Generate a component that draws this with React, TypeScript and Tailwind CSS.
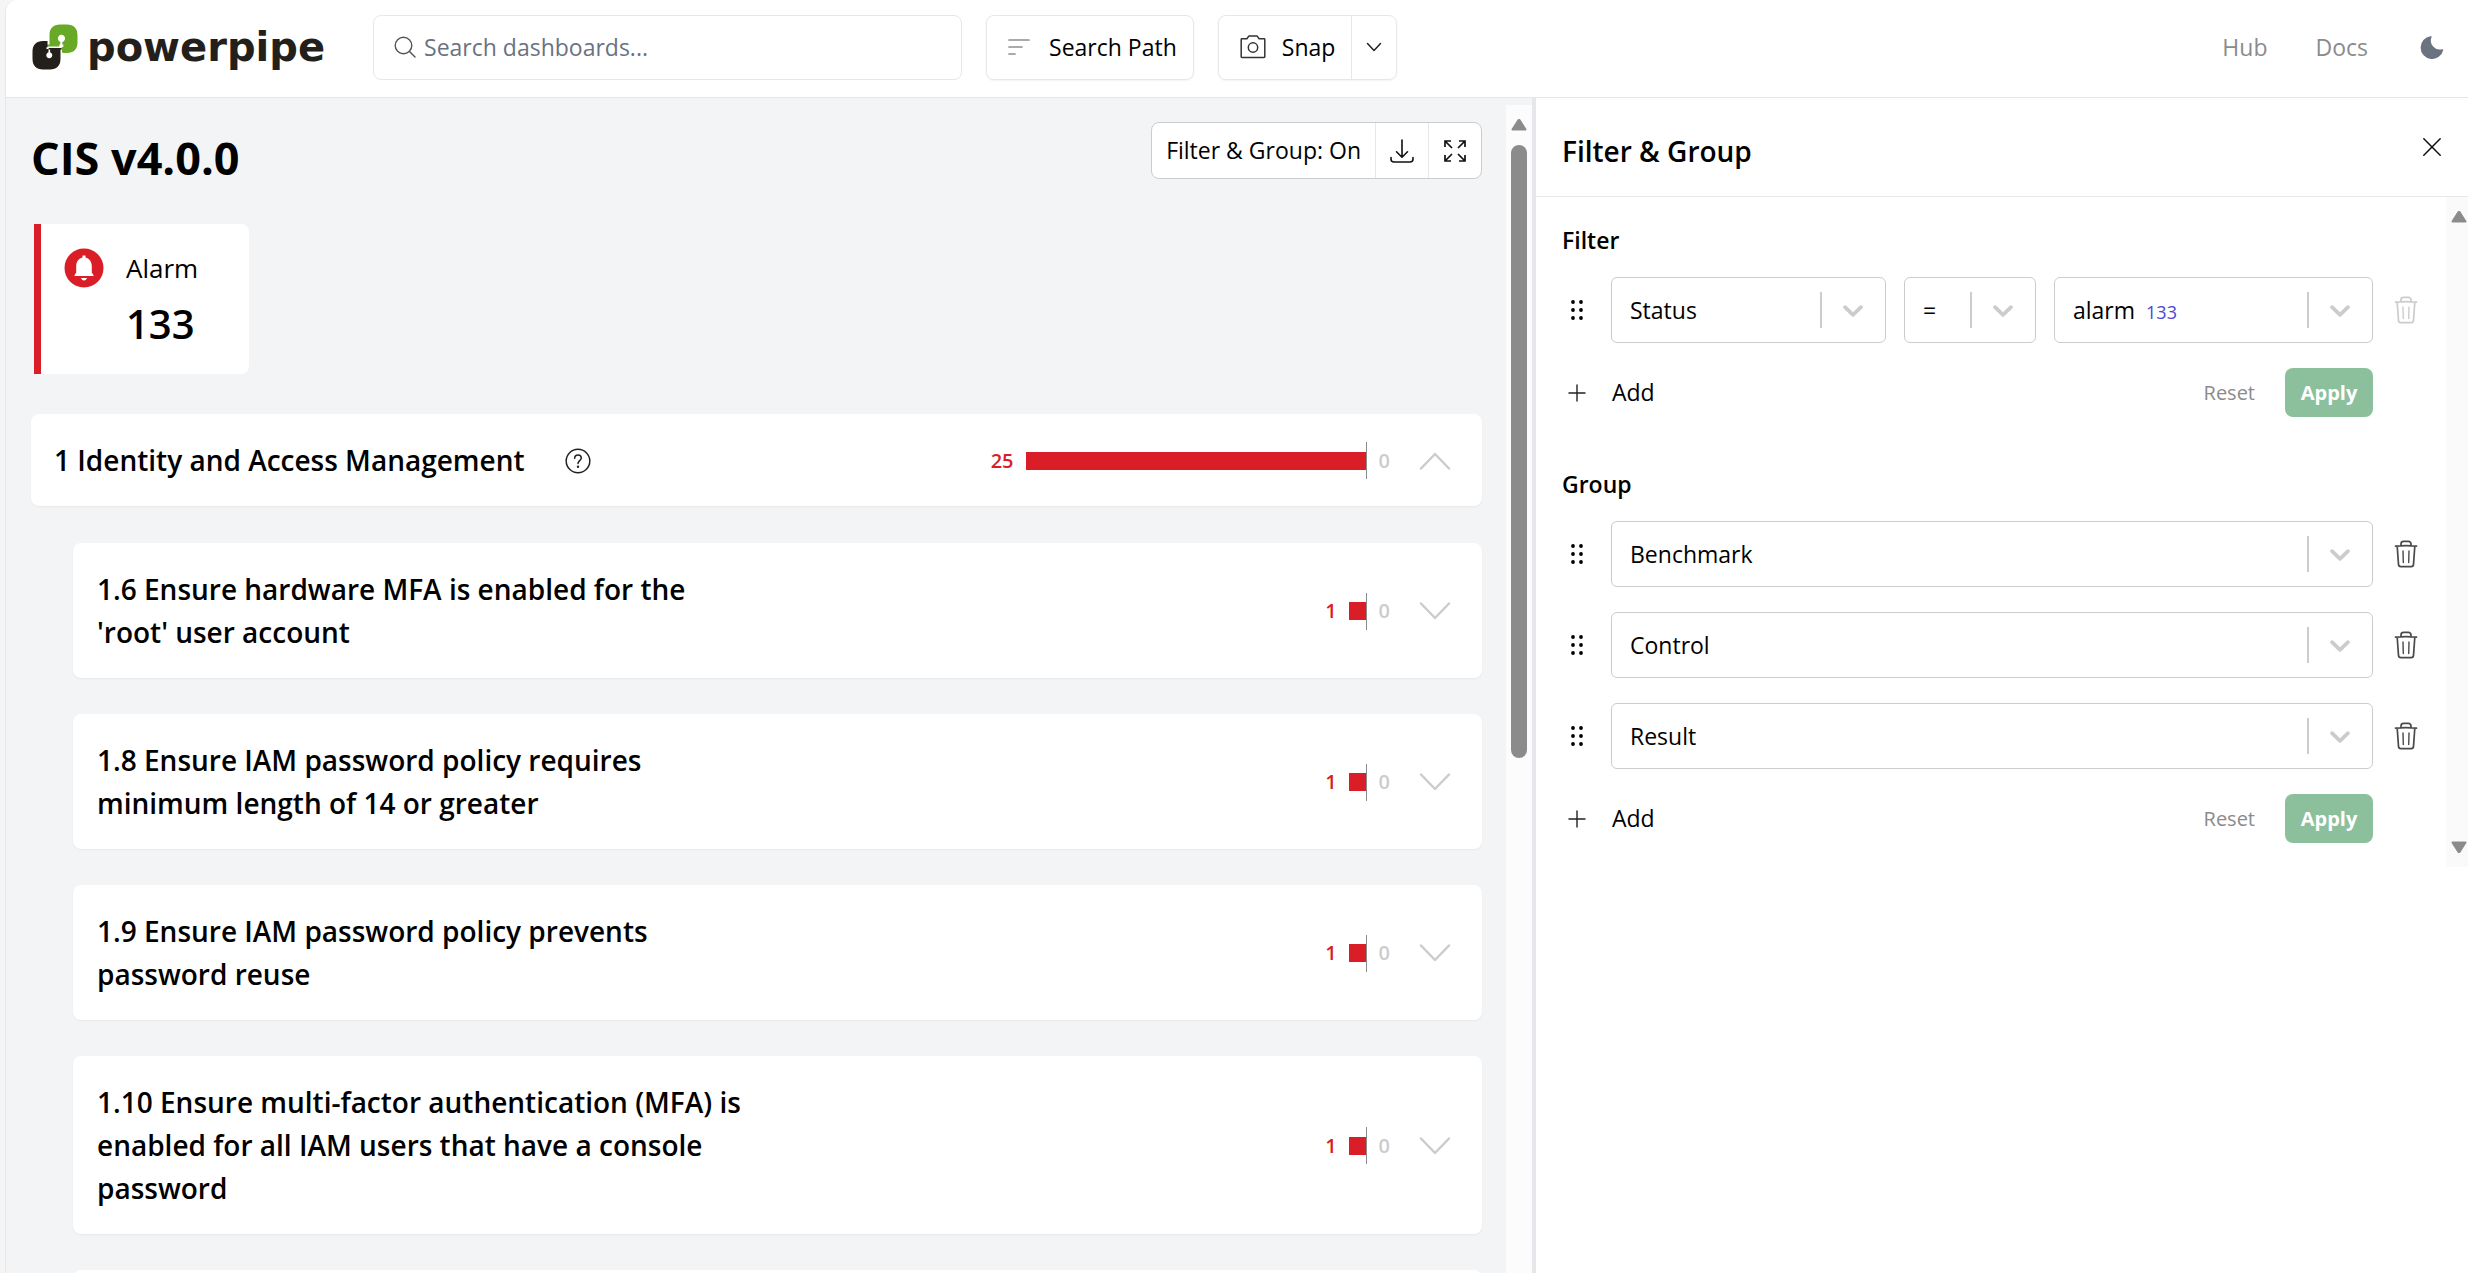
import React from "react";

const SELECT_CHEVRON =
  "M4.516 7.548c0.436-0.446 1.043-0.481 1.576 0l3.908 3.747 3.908-3.747c0.533-0.481 1.141-0.446 1.574 0 0.436 0.445 0.408 1.197 0 1.615-0.406 0.418-4.695 4.502-4.695 4.502-0.217 0.223-0.502 0.335-0.787 0.335s-0.57-0.112-0.789-0.335c0 0-4.287-4.084-4.695-4.502s-0.436-1.17 0-1.615z";

function Logo() {
  return (
    <a href="#home" aria-label="powerpipe" className="flex shrink-0 items-center gap-[9px] text-[#231f1a]">
      <svg viewBox="0 0 46 46" className="size-[46px] shrink-0" aria-hidden="true">
        <path
          fill="#68aa25"
          d="M17.5 20.5V11C17.5 4.5 21.5 .5 28 .5h7c6.500 0 10.500 4 10.500 10.500v7.500c0 6.500-4 10.500-10.500 10.500h-4.500c-.7-1.500-.8-3.500-.7-6h1.500v-2.500h-1v-2.600a3.600 3.600 0 1 0-2-.1v2.700h-1v2H15v-2z"
        />
        <path
          fill="#231f1a"
          d="M28.500 25.500V35c0 6.500-4 10.500-10.500 10.500h-7C4.500 45.500 .5 41.500 .5 35v-7.500C.5 21 4.500 17 11 17h4.500v6.200h-1V25h2v3.300a3 3 0 1 0 1.600 0V25.500h-1.500V24h13v1.500z"
        />
      </svg>
      <span className="font-['DejaVu_Sans'] text-[40px] leading-[50px] font-bold">powerpipe</span>
    </a>
  );
}

function TopBar() {
  return (
    <header className="flex h-[98px] shrink-0 items-center border-b border-gray-200 bg-white pr-6 pb-[3px] pl-[26px]">
      <Logo />
      <div className="ml-12 flex h-[65px] w-[589px] items-center gap-2 rounded-lg border border-gray-200 px-5">
        <svg viewBox="0 0 22 22" className="size-[22px] shrink-0" fill="none" stroke="#555" strokeWidth="1.4" strokeLinecap="round" aria-hidden="true">
          <circle cx="9.500" cy="9.500" r="8.300" />
          <path d="M15.500 15.500l5.500 5.500" />
        </svg>
        <input
          type="text"
          aria-label="Search dashboards"
          placeholder="Search dashboards..."
          className="min-w-0 flex-1 bg-transparent placeholder:text-gray-500 focus:outline-none"
        />
      </div>
      <button type="button" className="ml-6 flex h-[65px] items-center gap-[18px] rounded-lg border border-gray-200 pr-4 pl-5 whitespace-nowrap shadow-xs">
        <svg viewBox="0 0 24 18" className="h-[18px] w-6 shrink-0" stroke="#8f8f8f" strokeWidth="1.700" strokeLinecap="round" aria-hidden="true">
          <path d="M2 2h20M2 9h13M2 16h6" />
        </svg>
        Search Path
      </button>
      <div className="ml-6 flex h-[65px] rounded-lg border border-gray-200 shadow-xs">
        <button type="button" className="flex items-center gap-4 border-r border-gray-200 pr-4 pl-[21px]">
          <svg viewBox="0 0 26 26" className="size-[26px] shrink-0" fill="none" stroke="#333" strokeWidth="1.500" strokeLinejoin="round" aria-hidden="true">
            <path d="M1.200 5.500a.7.700 0 0 1 .7-.7h5L9 1.900h8l2.100 2.900h5a.7.700 0 0 1 .7.700v17.300a.7.700 0 0 1-.7.700H1.900a.7.700 0 0 1-.7-.7z" />
            <circle cx="13" cy="13.500" r="4.700" />
          </svg>
          Snap
        </button>
        <button type="button" aria-label="Snap options" className="flex w-11 items-center justify-center">
          <svg viewBox="0 0 16 10" className="h-[10px] w-4" fill="none" stroke="#222" strokeWidth="1.500" strokeLinecap="round" strokeLinejoin="round" aria-hidden="true">
            <path d="M1.500 1.500L8 8.500l6.500-7" />
          </svg>
        </button>
      </div>
      <nav className="ml-auto flex items-center text-[#8b8b8b]">
        <a href="#hub">Hub</a>
        <a href="#docs" className="ml-12">Docs</a>
        <button type="button" aria-label="Toggle theme" className="ml-[52px]">
          <svg viewBox="0 0 22 22" className="size-6" fill="#6b7280" aria-hidden="true">
            <path d="M9.700 1.100c.5-.3 1.100.1.900.7a8.300 8.300 0 0 0 9.900 11.200c.6-.2 1 .3.800.8A10.500 10.500 0 1 1 9.700 1.100z" />
          </svg>
        </button>
      </nav>
    </header>
  );
}

function ScrollArrow({ down = false }: { down?: boolean }) {
  return (
    <svg viewBox="0 0 16 12" className="h-3 w-4 shrink-0" fill="#8b8b8b" stroke="#8b8b8b" strokeWidth="2" strokeLinejoin="round" aria-hidden="true">
      {down ? <path d="M1.500 1.500h13L8.500 11h-1z" /> : <path d="M1.500 10.500h13L8.500 1h-1z" />}
    </svg>
  );
}

function CountBar({ count, wide = false }: { count: number; wide?: boolean }) {
  return (
    <div className="flex items-center text-[20px] font-semibold">
      <span className="text-[#d91e27]">{count}</span>
      <span className={wide ? "ml-3 h-[18px] w-[340px] bg-[#d91e27]" : "ml-3 h-[18px] w-[17px] bg-[#d91e27]"} />
      <span className="h-[37px] w-px bg-[#8b8b8b]" />
      <span className="ml-3 text-[#cccccc]">0</span>
    </div>
  );
}

function Toggle({ open = false, label }: { open?: boolean; label: string }) {
  return (
    <button type="button" aria-label={label} aria-expanded={open} className="ml-7">
      <svg viewBox="0 0 34 20" className="h-5 w-[34px]" fill="none" stroke="#cccccc" strokeWidth="2.500" strokeLinecap="round" strokeLinejoin="round" aria-hidden="true">
        {open ? <path d="M3 17.500L17 3l14 14.500" /> : <path d="M3 2.500L17 17l14-14.500" />}
      </svg>
    </button>
  );
}

const controls = [
  "1.6 Ensure hardware MFA is enabled for the 'root' user account",
  "1.8 Ensure IAM password policy requires minimum length of 14 or greater",
  "1.9 Ensure IAM password policy prevents password reuse",
  "1.10 Ensure multi-factor authentication (MFA) is enabled for all IAM users that have a console password",
];

function Dashboard() {
  return (
    <main className="min-w-0 flex-1 overflow-hidden pt-6 pr-6 pl-[25px]">
      <div className="flex items-start justify-between">
        <h1 className="pt-[5px] text-[45px] leading-[62px] font-bold">CIS v4.0.0</h1>
        <div className="flex h-[57px] rounded-lg border border-[#cccccc] bg-white">
          <button type="button" className="border-r border-gray-200 px-[14px] whitespace-nowrap">Filter &amp; Group: On</button>
          <button type="button" aria-label="Download" className="flex w-[53px] items-center justify-center border-r border-gray-200">
            <svg viewBox="0 0 24 24" className="size-6" fill="none" stroke="#111" strokeWidth="1.600" strokeLinecap="round" strokeLinejoin="round" aria-hidden="true">
              <path d="M12 1v17M6.500 12.800L12 18.200l5.500-5.400M1 18.500V20a3 3 0 0 0 3 3h16a3 3 0 0 0 3-3v-1.500" />
            </svg>
          </button>
          <button type="button" aria-label="Expand" className="flex w-[52px] items-center justify-center">
            <svg viewBox="0 0 22 22" className="size-[22px]" fill="none" stroke="#111" strokeWidth="1.700" aria-hidden="true">
              <path d="M1 7V1h6M15 1h6v6M21 15v6h-6M7 21H1v-6M1 1l7 7M21 1l-7 7M21 21l-7-7M1 21l7-7" />
            </svg>
          </button>
        </div>
      </div>
      <section className="mt-[35px] ml-[3px] flex h-[150px] w-[215px] items-start rounded-r-lg border-l-[7px] border-[#d91e27] bg-white pt-6 pl-[23px]">
        <svg viewBox="0 0 40 40" className="size-10 shrink-0" aria-hidden="true">
          <circle cx="20" cy="20" r="19.500" fill="#d91e27" />
          <path
            fill="#fff"
            d="M18.500 7.500h3v2c3.700 1 6.300 4 6.300 8.500v6.500l1.700 2.700v.8h-19v-.8l1.700-2.700V18c0-4.500 2.600-7.500 6.300-8.500zM17 30h6c-.5 1.600-1.600 2.500-3 2.500s-2.500-.9-3-2.500z"
          />
        </svg>
        <div className="ml-[22px]">
          <p className="text-[26px] leading-10">Alarm</p>
          <p className="pt-[5px] text-[40px] leading-[62px] font-semibold">133</p>
        </div>
      </section>
      <section className="mt-10 flex flex-col gap-[37px]">
        <div className="flex items-center rounded-lg bg-white pt-[25px] pr-[30px] pb-6 pl-[23px] shadow-xs">
          <h2 className="text-[28px] leading-[43px] font-semibold">1 Identity and Access Management</h2>
          <svg viewBox="0 0 26 26" className="ml-10 size-[26px] shrink-0" fill="none" stroke="#222" strokeWidth="1.500" strokeLinecap="round" aria-hidden="true">
            <circle cx="13" cy="13" r="11.800" />
            <path d="M9.700 10.300c0-2 1.400-3.400 3.300-3.400s3.300 1.300 3.300 3.100c0 2.600-3.300 2.700-3.300 5.500" />
            <circle cx="13" cy="18.700" r=".5" fill="#222" />
          </svg>
          <div className="ml-auto flex items-center">
            <CountBar count={25} wide />
            <Toggle open label="Collapse section" />
          </div>
        </div>
        <div className="ml-[42px] flex flex-col gap-9">
          {controls.map((title) => (
            <div key={title} className="flex items-center justify-between rounded-lg bg-white pt-[25px] pr-[30px] pb-6 pl-6 shadow-xs">
              <h3 className="w-1/2 pr-5 text-[28px] leading-[43px] font-semibold">{title}</h3>
              <div className="flex items-center">
                <CountBar count={1} />
                <Toggle label="Expand control" />
              </div>
            </div>
          ))}
          <div className="h-10 rounded-lg bg-white shadow-xs" />
        </div>
      </section>
    </main>
  );
}

function Picker({ label, value, badge, className }: { label: string; value: string; badge?: string; className: string }) {
  return (
    <div className={className}>
      <select
        aria-label={label}
        defaultValue={value}
        className={
          badge
            ? "h-full appearance-none bg-transparent [field-sizing:content] focus:outline-none"
            : "h-full min-w-0 flex-1 appearance-none bg-transparent focus:outline-none"
        }
      >
        <option>{value}</option>
      </select>
      {badge && <span className="mr-auto ml-[11px] pt-1 text-[18px] text-[#4b48d6]">{badge}</span>}
      <span className="h-9 w-0.5 bg-[#cccccc]" />
      <svg viewBox="0 0 20 20" className="ml-[14px] size-[34px] shrink-0" fill="#cccccc" aria-hidden="true">
        <path d={SELECT_CHEVRON} />
      </svg>
    </div>
  );
}

function Grip() {
  return (
    <svg viewBox="0 0 14 20" className="mr-[27px] ml-2 h-5 w-[14px] shrink-0" aria-hidden="true">
      {[2, 10, 18].map((y) => (
        <React.Fragment key={y}>
          <circle cx="3" cy={y} r="1.900" />
          <circle cx="11" cy={y} r="1.900" />
        </React.Fragment>
      ))}
    </svg>
  );
}

function DeleteButton({ disabled = false }: { disabled?: boolean }) {
  return (
    <button
      type="button"
      aria-label="Remove"
      disabled={disabled}
      className={disabled ? "ml-[21px] text-[#cccccc]" : "ml-[21px] text-[#4a4a4a]"}
    >
      <svg viewBox="0 0 24 28" className="h-7 w-6" fill="none" stroke="currentColor" strokeWidth="1.700" strokeLinecap="round" strokeLinejoin="round" aria-hidden="true">
        <path d="M1.500 6.200c7-.9 14-.9 21 0M7 5.300V4a2.600 2.600 0 0 1 2.600-2.600h4.800A2.600 2.600 0 0 1 17 4v1.300M3.200 6.200l1.300 18.200a2.300 2.300 0 0 0 2.300 2.200h10.400a2.300 2.300 0 0 0 2.300-2.200L20.800 6.200" />
        <path strokeWidth="1.400" d="M9 11l.3 11.500M15 11l-.3 11.500" />
      </svg>
    </button>
  );
}

function Actions() {
  return (
    <div className="mr-[45px] flex items-center">
      <button type="button" className="flex items-center">
        <svg viewBox="0 0 18 18" className="mr-[26px] ml-1.5 size-[18px]" stroke="#222" strokeWidth="1.400" strokeLinecap="round" aria-hidden="true">
          <path d="M9 1v16M1 9h16" />
        </svg>
        Add
      </button>
      <button type="button" className="ml-auto text-[20px] text-[#8b8b8b]">Reset</button>
      <button type="button" className="ml-[30px] h-[49px] w-[88px] rounded-lg bg-[#8cc09d] text-[20px] font-bold text-white">Apply</button>
    </div>
  );
}

const FIELD = "flex h-[66px] items-center rounded-md border border-[#cccccc] bg-white pr-[15px] pl-[18px]";
const FIELD_STATUS = FIELD + " w-[275px]";
const FIELD_OPERATOR = FIELD + " ml-[18px] w-[132px]";
const FIELD_VALUE = FIELD + " ml-[18px] min-w-0 flex-1";
const FIELD_FULL = FIELD + " min-w-0 flex-1";

function FilterPanel() {
  return (
    <aside className="flex w-[932px] shrink-0 flex-col bg-white">
      <div className="flex h-[99px] items-center justify-between border-b border-gray-200 pt-2 pr-6 pl-[26px]">
        <h2 className="text-[28px] leading-10 font-semibold">Filter &amp; Group</h2>
        <button type="button" aria-label="Close" className="mb-2">
          <svg viewBox="0 0 22 22" className="size-6" fill="none" stroke="#111" strokeWidth="1.400" strokeLinecap="round" aria-hidden="true">
            <path d="M3.500 3.500l15 15M18.500 3.500l-15 15" />
          </svg>
        </button>
      </div>
      <div className="flex h-[670px]">
        <div className="min-w-0 flex-1 pr-7 pl-[26px]">
          <h3 className="pt-[26px] pb-5 leading-[34px] font-semibold">Filter</h3>
          <div className="flex items-center">
            <Grip />
            <Picker label="Filter field" value="Status" className={FIELD_STATUS} />
            <Picker label="Operator" value="=" className={FIELD_OPERATOR} />
            <Picker label="Filter value" value="alarm" badge="133" className={FIELD_VALUE} />
            <DeleteButton disabled />
          </div>
          <div className="mt-[25px]">
            <Actions />
          </div>
          <h3 className="pt-[50px] pb-5 leading-[34px] font-semibold">Group</h3>
          <div className="mb-[25px] flex flex-col gap-[25px]">
            {["Benchmark", "Control", "Result"].map((value) => (
              <div key={value} className="flex items-center">
                <Grip />
                <Picker label={"Group by " + value} value={value} className={FIELD_FULL} />
                <DeleteButton />
              </div>
            ))}
          </div>
          <Actions />
        </div>
        <div className="flex w-[22px] flex-col items-center justify-between bg-[#fafafa] py-[14px] pl-1">
          <ScrollArrow />
          <ScrollArrow down />
        </div>
      </div>
    </aside>
  );
}

export default function App() {
  return (
    <div className="h-screen overflow-hidden bg-[#f5f5f5] pl-[5px] font-['Open_Sans',sans-serif] text-[23px] text-black">
      <div className="flex h-full flex-col overflow-hidden rounded-tl-xl border-l border-gray-200 bg-gray-100">
        <TopBar />
        <div className="flex min-h-0 flex-1">
          <Dashboard />
          <div className="mt-[7px] flex w-[26px] shrink-0 flex-col items-center bg-[#fcfcfc] pt-[14px]">
            <ScrollArrow />
            <div className="mt-[14px] h-[613px] w-4 rounded-full bg-[#8b8b8b]" />
          </div>
          <div className="w-1 shrink-0 bg-gray-200" />
          <FilterPanel />
        </div>
      </div>
    </div>
  );
}
